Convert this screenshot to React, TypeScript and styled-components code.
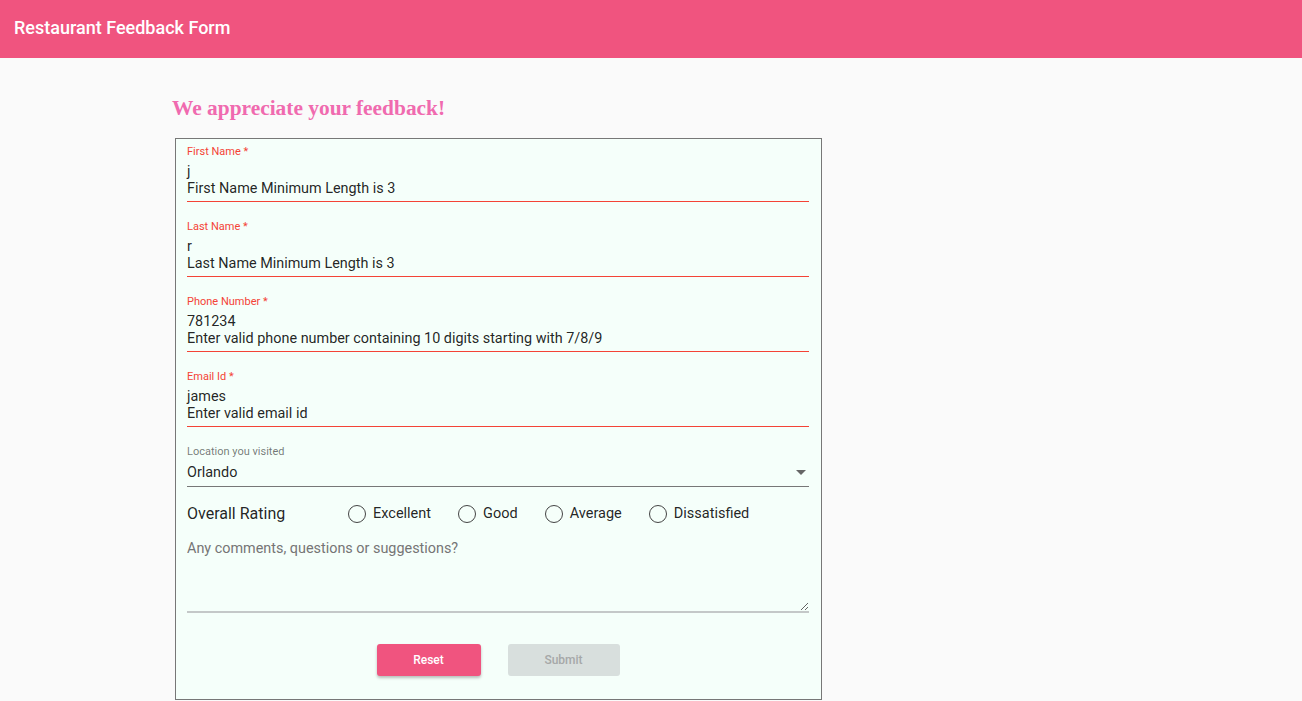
import React from "react";
import styled, { createGlobalStyle } from "styled-components";

const GlobalStyle = createGlobalStyle`
  html, body { margin: 0; padding: 0; background: #fafafa; }
  body { font-family: Roboto, "Liberation Sans", Arial, sans-serif; }
  * { box-sizing: border-box; }
`;

const Header = styled.header`
  height: 58px;
  background: #f0547f;
  display: flex;
  align-items: center;
  padding: 0 14px 4px 14px;
`;

const HeaderTitle = styled.h1`
  margin: 0;
  color: #fff;
  font-family: Roboto, sans-serif;
  font-size: 18px;
  font-weight: 500;
  letter-spacing: 0;
`;

const Main = styled.main`
  padding: 38px 0 0 172px;
`;

const Heading = styled.h2`
  margin: 0 0 18px 0;
  font-family: "Liberation Serif", "Times New Roman", serif;
  font-weight: bold;
  font-size: 21.4px;
  line-height: 24px;
  color: #f06aaf;
`;

const Card = styled.form`
  width: 647px;
  margin-left: 3px;
  background: #f5fffa;
  border: 1px solid #777;
  padding: 6px 12px 23px 11px;
  display: flex;
  flex-direction: column;
`;

const Field = styled.div<{ $error?: boolean }>`
  display: flex;
  flex-direction: column;
  padding-bottom: 4.5px;
  border-bottom: 1px solid ${(p) => (p.$error ? "#f44336" : "#777")};
  & + & { margin-top: 18px; }
`;

const Label = styled.label<{ $error?: boolean }>`
  font-size: 11px;
  line-height: 13px;
  color: ${(p) => (p.$error ? "#f44336" : "rgba(0,0,0,0.54)")};
  margin-bottom: 4.5px;
`;

const Value = styled.div`
  font-size: 14.4px;
  line-height: 17px;
  color: rgba(0, 0, 0, 0.87);
`;

const SelectRow = styled.div`
  display: flex;
  align-items: center;
  justify-content: space-between;
  padding-top: 1px;
  padding-bottom: 1px;
`;

const Caret = styled.span`
  width: 0;
  height: 0;
  border-left: 5px solid transparent;
  border-right: 5px solid transparent;
  border-top: 5px solid #666;
  margin-right: 3px;
`;

const RatingRow = styled.div`
  display: flex;
  align-items: center;
  margin-top: 14px;
  height: 24px;
`;

const RatingLabel = styled.span`
  width: 161px;
  font-size: 16px;
  color: rgba(0, 0, 0, 0.87);
`;

const RadioGroup = styled.div`
  display: flex;
  align-items: center;
  gap: 27px;
`;

const RadioItem = styled.label`
  display: flex;
  align-items: center;
  gap: 7px;
  font-size: 14.5px;
  color: rgba(0, 0, 0, 0.87);
`;

const RadioCircle = styled.span`
  width: 18px;
  height: 18px;
  border-radius: 50%;
  border: 1px solid #444;
  background: transparent;
  margin-top: 2px;
`;

const Comments = styled.textarea`
  margin-top: 14px;
  height: 74px;
  width: 100%;
  background: transparent;
  border: none;
  border-bottom: 2px solid #c4c8c8;
  font-family: Roboto, sans-serif;
  font-size: 14.4px;
  line-height: 20px;
  padding: 0;
  outline: none;
  color: rgba(0, 0, 0, 0.87);
  &::placeholder { color: #757575; }
`;

const Buttons = styled.div`
  display: flex;
  justify-content: center;
  gap: 27px;
  margin-top: 31px;
`;

const Button = styled.button<{ $primary?: boolean }>`
  height: 32px;
  width: ${(p) => (p.$primary ? "104px" : "112px")};
  border: none;
  border-radius: 3px;
  font-family: Roboto, sans-serif;
  font-size: 12px;
  font-weight: 500;
  background: ${(p) => (p.$primary ? "#f0547f" : "#d8dfdd")};
  color: ${(p) => (p.$primary ? "#fff" : "#a6a8a8")};
  box-shadow: ${(p) =>
    p.$primary ? "0 2px 3px rgba(0,0,0,0.25)" : "none"};
`;

const fields = [
  { label: "First Name *", value: "j", error: "First Name Minimum Length is 3" },
  { label: "Last Name *", value: "r", error: "Last Name Minimum Length is 3" },
  {
    label: "Phone Number *",
    value: "781234",
    error: "Enter valid phone number containing 10 digits starting with 7/8/9",
  },
  { label: "Email Id *", value: "james", error: "Enter valid email id" },
];

const ratings = ["Excellent", "Good", "Average", "Dissatisfied"];

export default function App() {
  return (
    <>
      <GlobalStyle />
      <Header>
        <HeaderTitle>Restaurant Feedback Form</HeaderTitle>
      </Header>
      <Main>
        <Heading>We appreciate your feedback!</Heading>
        <Card onSubmit={(e) => e.preventDefault()}>
          {fields.map((f) => (
            <Field key={f.label} $error>
              <Label $error>{f.label}</Label>
              <Value>{f.value}</Value>
              <Value>{f.error}</Value>
            </Field>
          ))}
          <Field>
            <Label>Location you visited</Label>
            <SelectRow>
              <Value>Orlando</Value>
              <Caret />
            </SelectRow>
          </Field>
          <RatingRow>
            <RatingLabel>Overall Rating</RatingLabel>
            <RadioGroup>
              {ratings.map((r) => (
                <RadioItem key={r}>
                  <RadioCircle />
                  {r}
                </RadioItem>
              ))}
            </RadioGroup>
          </RatingRow>
          <Comments placeholder="Any comments, questions or suggestions?" />
          <Buttons>
            <Button type="button" $primary>
              Reset
            </Button>
            <Button type="button" disabled>
              Submit
            </Button>
          </Buttons>
        </Card>
      </Main>
    </>
  );
}
